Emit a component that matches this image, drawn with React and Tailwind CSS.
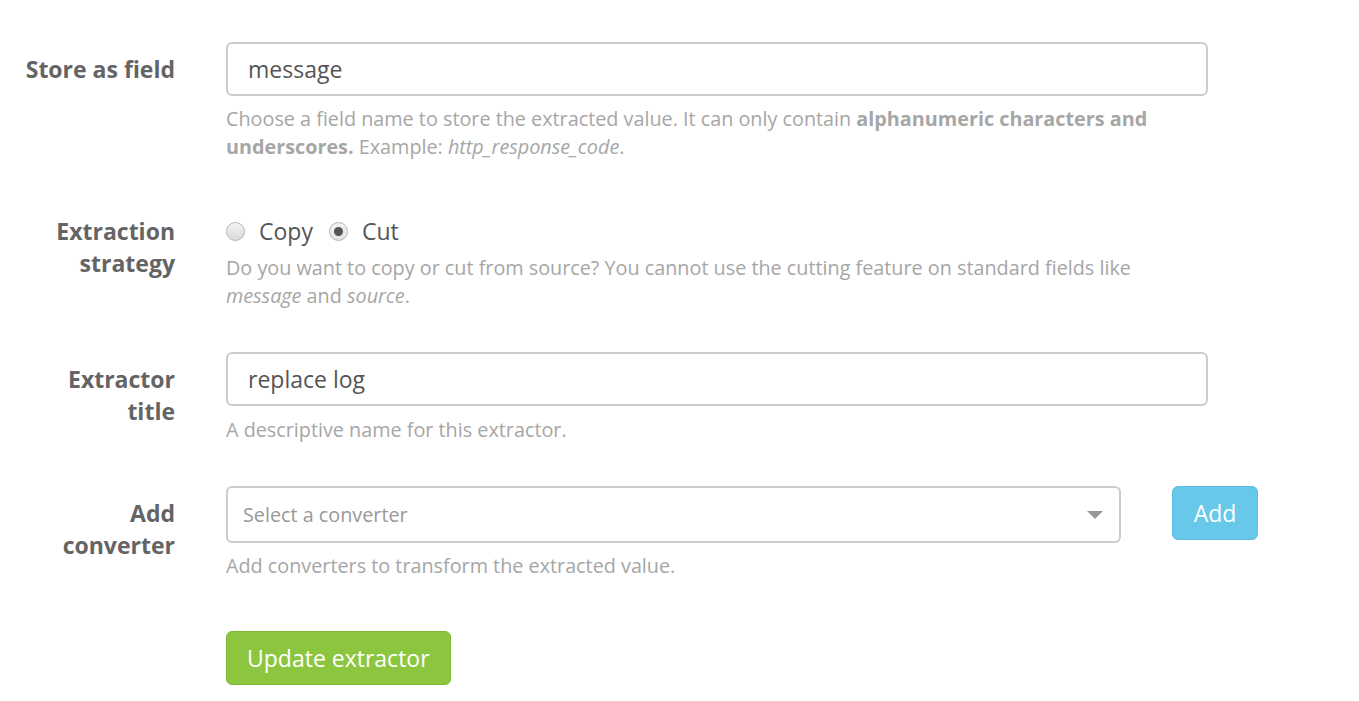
export default function App() {
  const font = { fontFamily: '"Open Sans", "Liberation Sans", sans-serif' };
  const label = "w-[175px] shrink-0 text-right font-bold text-[23px] leading-[32px] text-[#646464] pt-[11px]";
  const help = "text-[19.8px] leading-[28px] text-[#a6a6a6]";
  return (
    <div style={font} className="w-[1359px] h-[701px] bg-white overflow-hidden">
      <div className="pt-[42px]">
        {/* Row 1 */}
        <div className="flex gap-[51px]">
          <div className={label}>Store as field</div>
          <div className="w-[982px]">
            <div className="h-[54px] border-2 border-[#cccccc] rounded-[6px] flex items-center px-[20px] text-[23px] text-[#555]">
              message
            </div>
            <div className={help + " mt-[9px]"}>
              Choose a field name to store the extracted value. It can only contain{" "}
              <b className="font-bold">alphanumeric characters and underscores.</b> Example:{" "}
              <i>http_response_code</i>.
            </div>
          </div>
        </div>

        {/* Row 2 */}
        <div className="flex gap-[51px] mt-[43px]">
          <div className={label}>
            Extraction
            <br />
            strategy
          </div>
          <div className="w-[982px]">
            <div className="pt-[11px] h-[43px] flex items-center text-[23px] leading-[32px] text-[#555]">
              <span className="w-[19px] h-[19px] rounded-full border border-[#b5b5b5] bg-gradient-to-b from-[#f4f4f4] to-[#d9d9d9] shrink-0" />
              <span className="ml-[14px]">Copy</span>
              <span className="ml-[16px] w-[19px] h-[19px] rounded-full border border-[#b5b5b5] bg-gradient-to-b from-[#f4f4f4] to-[#e2e2e2] shrink-0 flex items-center justify-center">
                <span className="w-[9px] h-[9px] rounded-full bg-[#555]" />
              </span>
              <span className="ml-[14px]">Cut</span>
            </div>
            <div className={help + " mt-[7px] pr-[30px]"}>
              Do you want to copy or cut from source? You cannot use the cutting feature on standard fields like{" "}
              <i>message</i> and <i>source</i>.
            </div>
          </div>
        </div>

        {/* Row 3 */}
        <div className="flex gap-[51px] mt-[42px]">
          <div className={label}>
            Extractor
            <br />
            title
          </div>
          <div className="w-[982px]">
            <div className="h-[54px] border-2 border-[#cccccc] rounded-[6px] flex items-center px-[20px] text-[23px] text-[#555]">
              replace log
            </div>
            <div className={help + " mt-[10px]"}>A descriptive name for this extractor.</div>
          </div>
        </div>

        {/* Row 4 */}
        <div className="flex gap-[51px] mt-[42px]">
          <div className={label}>
            Add
            <br />
            converter
          </div>
          <div className="w-[1032px]">
            <div className="flex gap-[51px]">
              <div className="w-[895px] h-[57px] border-2 border-[#cccccc] rounded-[6px] flex items-center justify-between pl-[15px] pr-[16px] text-[19.8px] text-[#999]">
                <span>Select a converter</span>
                <svg width="16" height="8" viewBox="0 0 16 8">
                  <path d="M0 0 L16 0 L8 8 Z" fill="#999" />
                </svg>
              </div>
              <button className="w-[86px] h-[54px] rounded-[6px] bg-[#67c8ea] border border-[#5cbfe2] text-white text-[23px] flex items-center justify-center">
                Add
              </button>
            </div>
            <div className={help + " mt-[9px]"}>Add converters to transform the extracted value.</div>
          </div>
        </div>

        {/* Submit */}
        <div className="flex gap-[51px] mt-[51px]">
          <div className="w-[175px] shrink-0" />
          <button className="h-[54px] px-[20px] rounded-[6px] bg-[#8cc63f] border border-[#7db736] text-white text-[23px] flex items-center justify-center">
            Update extractor
          </button>
        </div>
      </div>
    </div>
  );
}
